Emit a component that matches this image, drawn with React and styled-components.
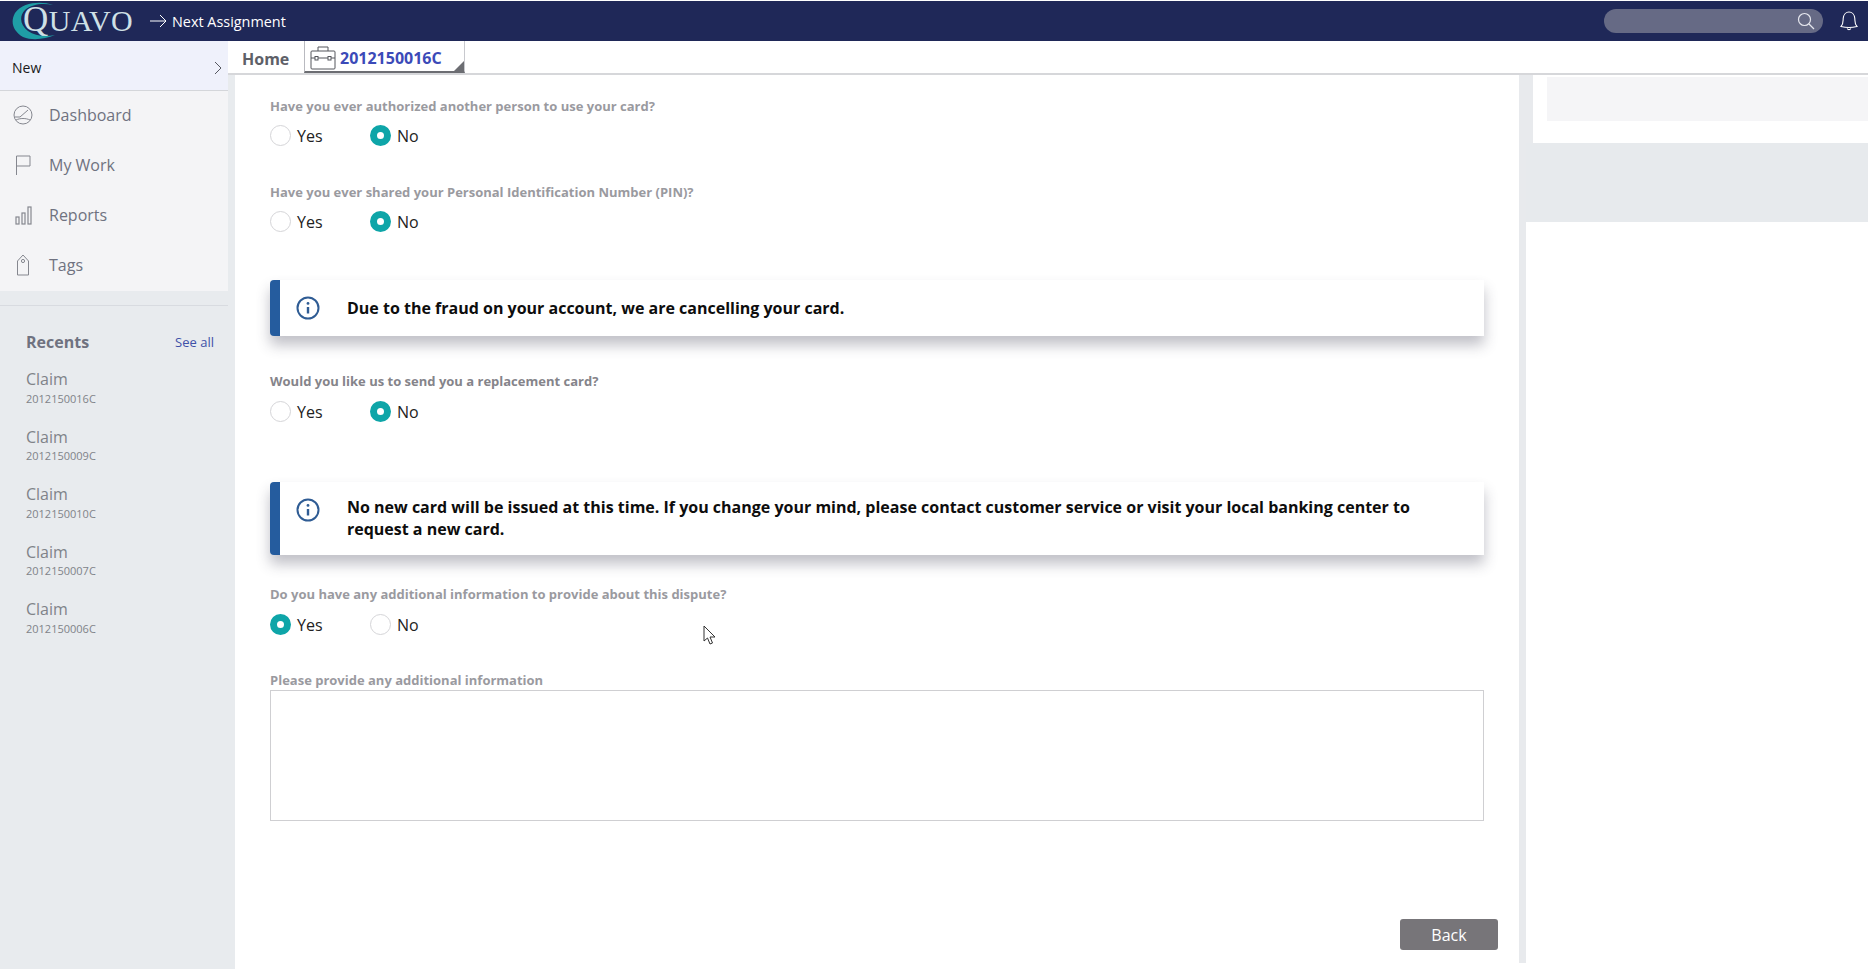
import React from 'react';
import styled, { createGlobalStyle } from 'styled-components';

const GlobalStyle = createGlobalStyle`
  html, body {
    margin: 0;
    padding: 0;
    height: 100%;
    overflow: hidden;
    background: #fff;
  }
  body {
    font-family: "Open Sans", "Liberation Sans", sans-serif;
  }
  * {
    box-sizing: border-box;
  }
`;

const Page = styled.div`
  position: relative;
  width: 1868px;
  height: 969px;
  display: flex;
  flex-direction: column;
  background: #fff;
  overflow: hidden;
`;

const Header = styled.header`
  flex: none;
  height: 40px;
  margin-top: 1px;
  padding: 0 10px 0 11px;
  display: flex;
  align-items: center;
  background: #1f2858;
  color: #fff;
`;

const Logo = styled.div`
  position: relative;
  flex: none;
  width: 125px;
  height: 40px;
  padding: 1px 0 0 12px;
`;

const LogoText = styled.span`
  display: inline-block;
  font-family: "Liberation Serif", serif;
  font-size: 30px;
  line-height: 36px;
  letter-spacing: 0.4px;
  color: #cfe0e6;
  &::first-letter {
    font-size: 35px;
  }
`;

const LogoRing = styled.svg`
  position: absolute;
  left: 0;
  top: 0;
`;

const NextLink = styled.div`
  display: flex;
  align-items: center;
  gap: 5px;
  margin-left: 14px;
  font-size: 14.4px;
`;

const Spacer = styled.div`
  flex: 1;
`;

const Search = styled.div`
  width: 219px;
  height: 24px;
  margin-right: 17px;
  padding-right: 8px;
  display: flex;
  align-items: center;
  justify-content: flex-end;
  border-radius: 12px;
  background: #666a85;
`;

const Body = styled.div`
  flex: 1;
  min-height: 0;
  display: flex;
`;

const Sidebar = styled.aside`
  flex: none;
  width: 235px;
  background: #e8ebee;
`;

const NavPanel = styled.div`
  width: 228px;
  height: 250px;
  background: #f4f4f6;
`;

const NewRow = styled.div`
  height: 50px;
  padding: 4px 5px 0 12px;
  display: flex;
  align-items: center;
  justify-content: space-between;
  background: #eff1fb;
  border-bottom: 1px solid #d4d6da;
  font-size: 14px;
  color: #1a1a1a;
`;

const NavItem = styled.div`
  height: 50px;
  padding: 0 0 2px 13px;
  display: flex;
  align-items: center;
  gap: 16px;
  font-size: 16px;
  color: #6f7280;
`;

const NavIcon = styled.svg`
  flex: none;
  color: #85878f;
`;

const RecentsBlock = styled.div`
  width: 228px;
  margin-top: 14px;
  border-top: 1px solid #d8dbe0;
  padding: 26px 14px 0 26px;
`;

const RecentsHead = styled.div`
  display: flex;
  align-items: center;
  justify-content: space-between;
  height: 20px;
  margin-bottom: 13px;
`;

const RecentsTitle = styled.span`
  font-size: 16px;
  font-weight: 700;
  color: #6f7280;
`;

const SeeAll = styled.span`
  font-size: 13px;
  color: #3f51a8;
`;

const Recent = styled.div`
  height: 57.5px;
  padding-top: 3px;
`;

const RecentName = styled.div`
  font-size: 16px;
  line-height: 22px;
  color: #808389;
`;

const RecentId = styled.div`
  margin-top: 0.5px;
  font-size: 11px;
  line-height: 15px;
  color: #808389;
`;

const Workspace = styled.div`
  flex: 1;
  min-width: 0;
  display: flex;
  flex-direction: column;
`;

const TabBar = styled.div`
  flex: none;
  height: 34px;
  margin-left: -7px;
  display: flex;
  background: #fff;
  border-bottom: 2px solid #d6d7da;
`;

const HomeTab = styled.div`
  width: 76px;
  padding-left: 14px;
  font-size: 16px;
  font-weight: 700;
  line-height: 36px;
  color: #5e6068;
`;

const CaseTab = styled.div`
  position: relative;
  width: 161px;
  height: 32px;
  padding: 3px 0 0 5px;
  display: flex;
  align-items: center;
  gap: 4px;
  border-left: 1px solid #b9bac0;
  border-right: 1px solid #c8c9ce;
  border-bottom: 2px solid #6c6d72;
  font-size: 16px;
  font-weight: 700;
  color: #3b4ab8;
`;

const TabCorner = styled.span`
  position: absolute;
  right: 0;
  bottom: 0;
  width: 0;
  height: 0;
  border-style: solid;
  border-width: 0 0 10px 10px;
  border-color: transparent transparent #6c6d72 transparent;
`;

const Columns = styled.div`
  flex: 1;
  min-height: 0;
  display: flex;
`;

const Main = styled.main`
  flex: none;
  width: 1284px;
  height: 888px;
  padding: 21px 0 0 35px;
  display: flex;
  flex-direction: column;
  background: #fff;
`;

const Label = styled.div`
  flex: none;
  height: 20px;
  margin-top: ${({ $top }) => $top || 0}px;
  font-size: 13px;
  font-weight: 700;
  line-height: 20px;
  color: ${({ $tone }) => $tone || '#9a9a9f'};
`;

const RadioRow = styled.div`
  flex: none;
  margin-top: ${({ $top }) => $top || 9}px;
  height: 21px;
  display: flex;
`;

const RadioOption = styled.div`
  width: 100px;
  display: flex;
  align-items: center;
  gap: 6px;
  font-size: 16px;
  color: #222;
`;

const RadioDot = styled.span`
  flex: none;
  width: 21px;
  height: 21px;
  border-radius: 50%;
  border: ${({ $on }) => ($on ? '7px solid #0ea5a8' : '1px solid #d5d5d8')};
  background: #fff;
`;

const Alert = styled.div`
  flex: none;
  width: 1214px;
  height: ${({ $h }) => $h}px;
  margin-top: ${({ $top }) => $top}px;
  padding: 0 50px ${({ $lift }) => $lift || 0}px 0;
  display: flex;
  align-items: center;
  border-left: 10px solid #255c9e;
  border-radius: 4px 0 0 4px;
  background: #fff;
  box-shadow: 0 9px 14px rgba(60, 60, 80, 0.32);
  font-size: 16px;
  font-weight: 700;
  line-height: 22px;
  color: #0d0d0d;
`;

const AlertIcon = styled.svg`
  flex: none;
  align-self: flex-start;
  margin: 16px 27px 0 16px;
  color: #2f5c94;
`;

const TextBox = styled.div`
  flex: none;
  width: 1214px;
  height: 131px;
  border: 1px solid #cfcfd2;
  background: #fff;
`;

const Actions = styled.div`
  width: 1228px;
  margin-top: 98px;
  display: flex;
  justify-content: flex-end;
`;

const BackButton = styled.button`
  width: 98px;
  height: 31px;
  padding: 0;
  border: none;
  border-radius: 3px;
  background: #777579;
  color: #fff;
  font-family: inherit;
  font-size: 16px;
`;

const Gutter = styled.div`
  flex: none;
  width: 7px;
  height: 888px;
  background: #e8eaed;
`;

const Aside = styled.div`
  flex: 1;
  min-width: 0;
  display: flex;
  flex-direction: column;
`;

const AsideTop = styled.div`
  height: 68px;
  padding-left: 7px;
  background: #e8eaed;
`;

const AsideInner = styled.div`
  height: 68px;
  padding: 2px 0 0 14px;
  background: #fff;
`;

const AsideCard = styled.div`
  height: 44px;
  background: #f5f5f7;
`;

const AsideBand = styled.div`
  height: 79px;
  background: #e7eaed;
`;

const Cursor = styled.svg`
  position: absolute;
  left: 703px;
  top: 625px;
`;

const recents = ['2012150016C', '2012150009C', '2012150010C', '2012150007C', '2012150006C'];

const InfoIcon = () => (
  <AlertIcon width="24" height="24" viewBox="0 0 24 24" fill="none" stroke="currentColor">
    <circle cx="12" cy="12" r="10.5" strokeWidth="2" />
    <line x1="12" y1="11" x2="12" y2="17.5" strokeWidth="2.4" />
    <circle cx="12" cy="7.4" r="1.4" fill="currentColor" stroke="none" />
  </AlertIcon>
);

const YesNo = ({ value, top }) => (
  <RadioRow $top={top}>
    <RadioOption><RadioDot $on={value === 'yes'} />Yes</RadioOption>
    <RadioOption><RadioDot $on={value === 'no'} />No</RadioOption>
  </RadioRow>
);

export default function App() {
  return (
    <Page>
      <GlobalStyle />
      <Header>
        <Logo>
          <LogoRing width="60" height="40" viewBox="0 0 60 40" fill="none">
            <path d="M42 4 C30 0 12 1 4 12 C-1 21 2 30 12 36 C22 40 34 38 44 34 C34 36 24 35 17 30 C9 24 8 15 14 9 C21 3 32 2 42 4 Z" fill="#1f9ea6" />
          </LogoRing>
          <LogoText>QUAVO</LogoText>
        </Logo>
        <NextLink>
          <svg width="17" height="14" viewBox="0 0 17 14" fill="none" stroke="#fff" strokeWidth="1">
            <path d="M0 7 H16 M10 1 L16 7 L10 13" />
          </svg>
          Next Assignment
        </NextLink>
        <Spacer />
        <Search>
          <svg width="18" height="18" viewBox="0 0 18 18" fill="none" stroke="#e6e7ee" strokeWidth="1.2">
            <circle cx="7.5" cy="7.5" r="6" />
            <path d="M12 12 L17 17" />
          </svg>
        </Search>
        <svg width="18" height="20" viewBox="0 0 18 20" fill="none" stroke="#fff" strokeWidth="1.1">
          <path d="M1 15.5 C3.5 13 3 10 3.2 7.5 C3.5 3.5 6 1 9 1 C12 1 14.5 3.5 14.8 7.5 C15 10 14.5 13 17 15.5 C12 16.8 6 16.8 1 15.5 Z" />
          <path d="M7.2 17.5 C8 19 10 19 10.8 17.5" />
        </svg>
      </Header>
      <Body>
        <Sidebar>
          <NavPanel>
            <NewRow>
              New
              <svg width="10" height="14" viewBox="0 0 10 14" fill="none" stroke="#55575f" strokeWidth="1">
                <path d="M2 1 L8 7 L2 13" />
              </svg>
            </NewRow>
            <NavItem>
              <NavIcon width="20" height="20" viewBox="0 0 20 20" fill="none" stroke="currentColor" strokeWidth="1">
                <circle cx="10" cy="10" r="9" />
                <path d="M2 12 H7 L15 5 M3 15 C7 13 13 13 17 15" />
              </NavIcon>
              Dashboard
            </NavItem>
            <NavItem>
              <NavIcon width="20" height="20" viewBox="0 0 20 20" fill="none" stroke="currentColor" strokeWidth="1">
                <path d="M3.5 20 V1 H17 V11 H3.5" />
              </NavIcon>
              My Work
            </NavItem>
            <NavItem>
              <NavIcon width="20" height="20" viewBox="0 0 20 20" fill="none" stroke="currentColor" strokeWidth="1.2">
                <rect x="3" y="12" width="3" height="7" />
                <rect x="9" y="8" width="3" height="11" />
                <rect x="15" y="2" width="3" height="17" />
              </NavIcon>
              Reports
            </NavItem>
            <NavItem>
              <NavIcon width="20" height="22" viewBox="0 0 20 22" fill="none" stroke="currentColor" strokeWidth="1">
                <path d="M4.5 21 V7 L10 1 L15.5 7 V21 Z" />
                <circle cx="10" cy="7" r="1.6" />
              </NavIcon>
              Tags
            </NavItem>
          </NavPanel>
          <RecentsBlock>
            <RecentsHead>
              <RecentsTitle>Recents</RecentsTitle>
              <SeeAll>See all</SeeAll>
            </RecentsHead>
            {recents.map((id) => (
              <Recent key={id}>
                <RecentName>Claim</RecentName>
                <RecentId>{id}</RecentId>
              </Recent>
            ))}
          </RecentsBlock>
        </Sidebar>
        <Workspace>
          <TabBar>
            <HomeTab>Home</HomeTab>
            <CaseTab>
              <svg width="26" height="24" viewBox="0 0 26 24" fill="none" stroke="#55565c" strokeWidth="1">
                <rect x="1" y="5" width="24" height="18" rx="1" />
                <path d="M8 5 V1 H18 V5 M1 12 H25" />
                <rect x="5" y="10.5" width="3" height="3.5" fill="#fff" />
                <rect x="18" y="10.5" width="3" height="3.5" fill="#fff" />
              </svg>
              2012150016C
              <TabCorner />
            </CaseTab>
          </TabBar>
          <Columns>
            <Main>
              <Label>Have you ever authorized another person to use your card?</Label>
              <YesNo value="no" />
              <Label $top={36}>Have you ever shared your Personal Identification Number (PIN)?</Label>
              <YesNo value="no" />
              <Alert $h={56} $top={48}>
                <InfoIcon />
                Due to the fraud on your account, we are cancelling your card.
              </Alert>
              <Label $top={35} $tone="#85848a">Would you like us to send you a replacement card?</Label>
              <YesNo value="no" top={10} />
              <Alert $h={73} $top={60} $lift={2}>
                <InfoIcon />
                No new card will be issued at this time. If you change your mind, please contact customer service or visit your local banking center to request a new card.
              </Alert>
              <Label $top={29}>Do you have any additional information to provide about this dispute?</Label>
              <YesNo value="yes" top={10} />
              <Label $top={35}>Please provide any additional information</Label>
              <TextBox />
              <Actions>
                <BackButton>Back</BackButton>
              </Actions>
            </Main>
            <Gutter />
            <Aside>
              <AsideTop>
                <AsideInner>
                  <AsideCard />
                </AsideInner>
              </AsideTop>
              <AsideBand />
            </Aside>
          </Columns>
        </Workspace>
      </Body>
      <Cursor width="14" height="21" viewBox="0 0 14 21" fill="#fff" stroke="#333" strokeWidth="1">
        <path d="M1 1 V16 L4.5 13 L7 19 L9.5 18 L7 12 H12 Z" />
      </Cursor>
    </Page>
  );
}
